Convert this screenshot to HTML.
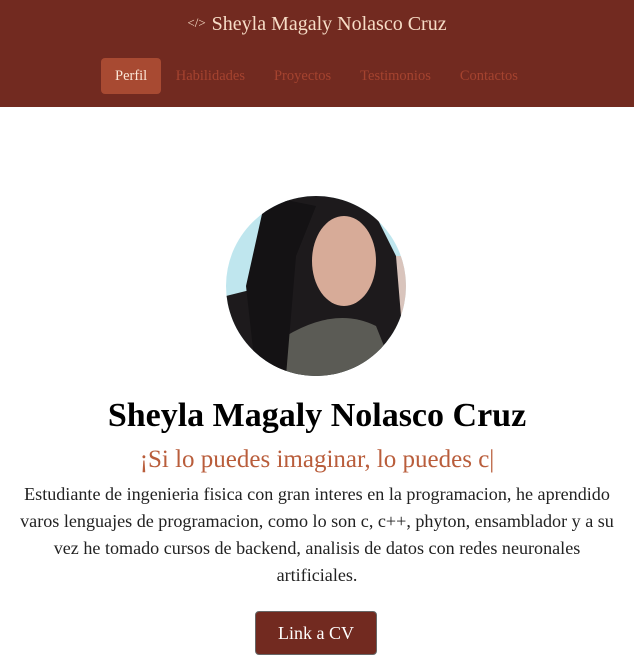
<!DOCTYPE html>
<html><head><meta charset="utf-8"><style>
body{margin:0;width:634px;height:665px;overflow:hidden;background:#fff;font-family:"Liberation Serif",serif}
.hd{height:107px;background:#722a20;position:relative}
.t{position:absolute;top:13px;left:0;right:0;text-align:center;color:#f6dcc6;font-size:20px}
.t small{font-size:13px;margin-right:6px;vertical-align:3px}
.nav{position:absolute;top:58px;left:101px;display:flex;font-size:14.5px;color:#a5432f}
.nav span{display:block;padding:0 14.5px;line-height:36px}
.nav .a{background:#a84a32;color:#fbe6d6;border-radius:4px;padding:0 14px}
h1{position:absolute;top:397px;left:0;right:0;margin:0;text-align:center;font-size:34px;font-weight:bold;color:#000}
.tag{position:absolute;top:446px;left:0;right:0;text-align:center;color:#b95d3b;font-size:25px}
p{position:absolute;top:481px;left:0;right:0;margin:0;text-align:center;font-size:18.1px;line-height:27px;color:#222;white-space:nowrap}
.btn{position:absolute;left:255px;top:611px;width:120px;height:42px;background:#722a20;border:1px solid #666;border-radius:4px;color:#fff;font-size:18px;text-align:center;line-height:42px}
</style></head><body>
<div class="hd"><div class="t"><small>&lt;/&gt;</small>Sheyla Magaly Nolasco Cruz</div>
<div class="nav"><span class="a">Perfil</span><span>Habilidades</span><span>Proyectos</span><span>Testimonios</span><span>Contactos</span></div></div>
<svg style="position:absolute;left:226px;top:196px" width="180" height="180" viewBox="0 0 180 180">
<defs><clipPath id="c"><circle cx="90" cy="90" r="90"/></clipPath></defs>
<g clip-path="url(#c)">
<rect width="180" height="180" fill="#bfe6ee"/>
<rect x="120" y="60" width="60" height="60" fill="#d9c4bc"/>
<path d="M60 0 L140 0 L170 60 L180 180 L0 180 L0 100 L40 90 Z" fill="#1d1a1c"/>
<ellipse cx="118" cy="65" rx="32" ry="45" fill="#d7ab98"/>
<path d="M60 140 Q110 110 150 130 L170 180 L50 180 Z" fill="#5b5b55"/>
<path d="M40 0 L90 10 L70 60 L60 180 L30 180 L20 90 Z" fill="#141214"/>
</g></svg>
<h1>Sheyla Magaly Nolasco Cruz</h1>
<div class="tag">¡Si lo puedes imaginar, lo puedes c|</div>
<p>Estudiante de ingenieria fisica con gran interes en la programacion, he aprendido<br>varos lenguajes de programacion, como lo son c, c++, phyton, ensamblador y a su<br>vez he tomado cursos de backend, analisis de datos con redes neuronales<br>artificiales.</p>
<div class="btn">Link a CV</div>
</body></html>
